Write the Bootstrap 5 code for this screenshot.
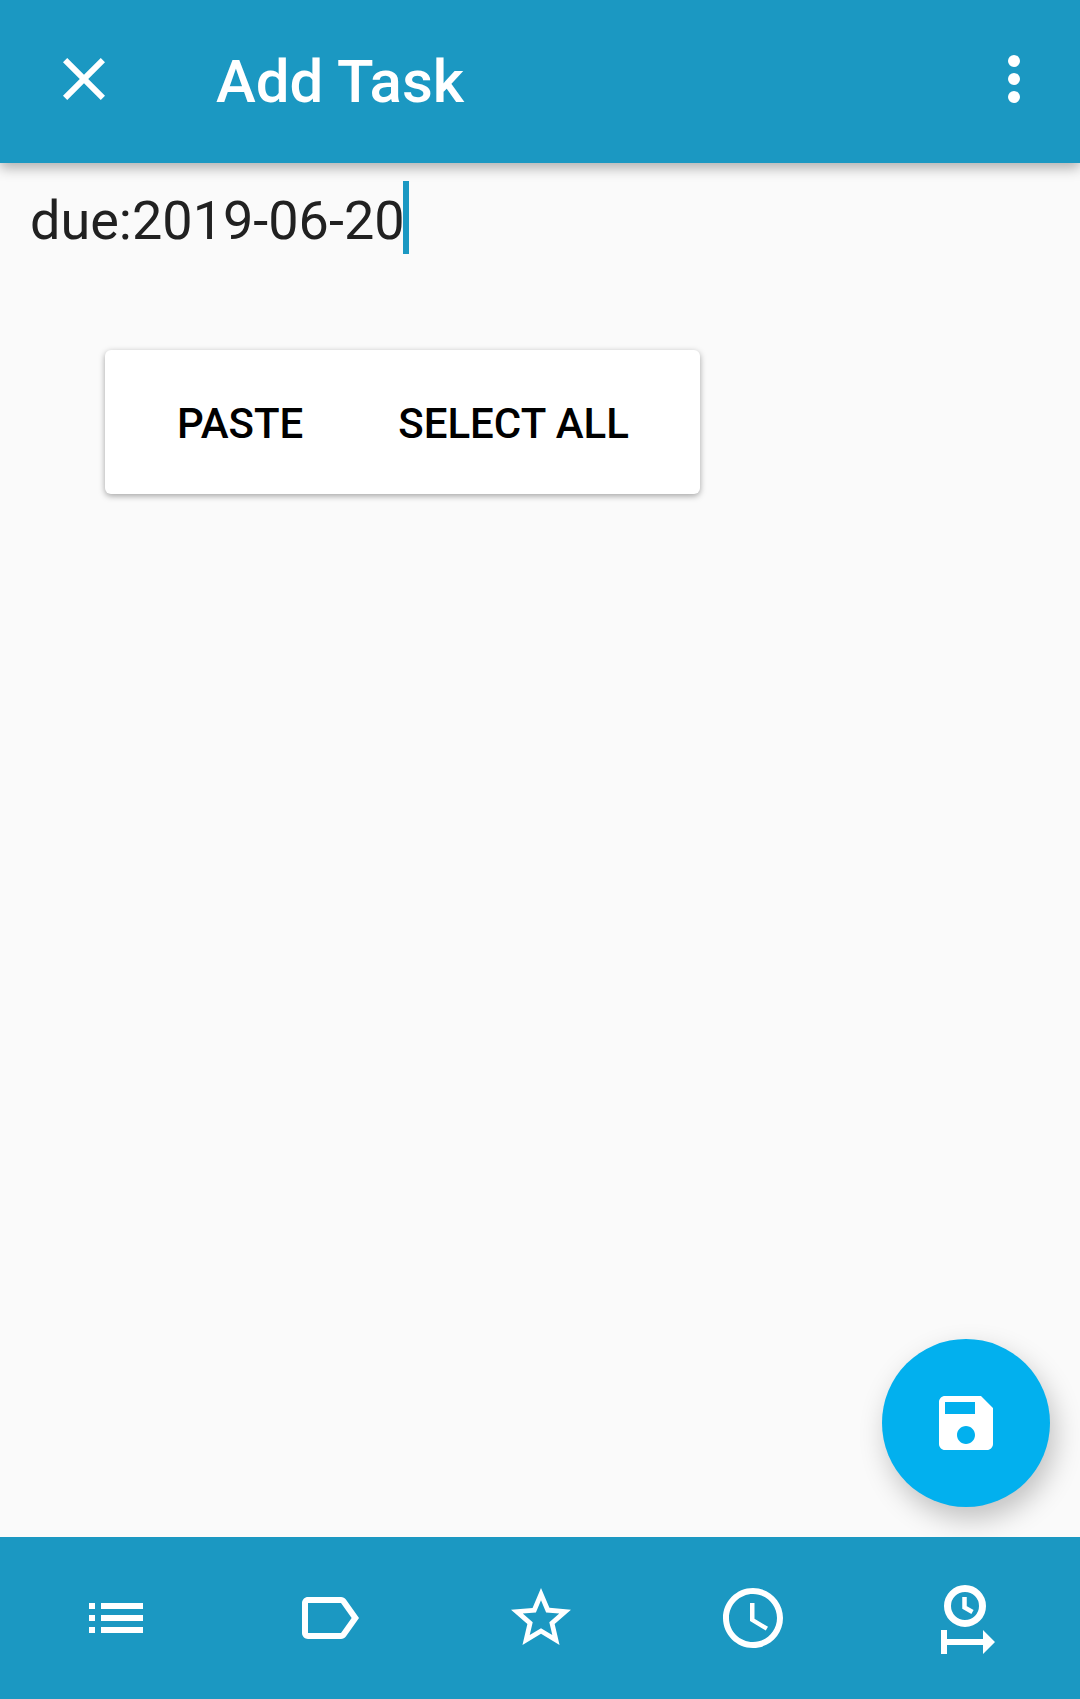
<!DOCTYPE html>
<html lang="en">
<head>
<meta charset="utf-8">
<meta name="viewport" content="width=device-width, initial-scale=1">
<title>Add Task</title>
<link href="https://cdn.jsdelivr.net/npm/bootstrap@5.3.0/dist/css/bootstrap.min.css" rel="stylesheet">
<style>
  body { font-family: Roboto, "Noto Sans", sans-serif; background: #fafafa; }
  .bar { background: #1b98c2; color: #fff; z-index: 2; }
  .bar-top { min-height: 163px; padding: 0 30px 0 48px; box-shadow: 0 5px 12px rgba(0,0,0,.3); }
  .bar-bottom { height: 162px; padding: 0 8px 0 10px; }
  .bar-title { font-size: 60px; line-height: 72px; font-weight: 500; margin-left: 96px; }
  .btn-icon { padding: 0; border: 0; color: inherit; line-height: 0; }
  .btn-icon svg, .fab svg { width: 72px; height: 72px; fill: currentColor; }
  .bar-top .btn-icon { padding-bottom: 5px; }
  .task-line { padding: 18px 30px 0 30px; }
  .task-input { width: 373px; height: 78px; font-size: 54px; color: #212121; background: transparent; outline: 0; }
  .caret { width: 6px; height: 73px; background: #1b98c2; }
  .edit-menu { top: 187px; left: 105px; padding: 0 24px; border-radius: 6px; background: #fff; box-shadow: 0 2px 6px rgba(0,0,0,.35); }
  .edit-menu .btn { height: 144px; padding: 2px 47px 0 48px; border: 0; font-size: 42px; font-weight: 500; color: #000; white-space: nowrap; }
  .fab { right: 30px; bottom: 30px; width: 168px; height: 168px; padding: 0; border: 0; color: #fff; background: #02b0ee; box-shadow: 5px 12px 28px rgba(0,0,0,.23); }
  .fab:hover { color: #fff; background: #02b0ee; }
</style>
</head>
<body class="d-flex flex-column min-vh-100">

<header class="bar bar-top position-relative d-flex align-items-center">
  <button type="button" class="btn btn-icon" aria-label="Close">
    <svg viewBox="0 0 24 24"><path d="M19 6.41 17.59 5 12 10.59 6.41 5 5 6.41 10.59 12 5 17.59 6.41 19 12 13.41 17.59 19 19 17.59 13.41 12z"/></svg>
  </button>
  <h1 class="bar-title mb-0">Add Task</h1>
  <button type="button" class="btn btn-icon ms-auto" aria-label="More options">
    <svg viewBox="0 0 24 24"><circle cx="12" cy="6" r="2"/><circle cx="12" cy="12" r="2"/><circle cx="12" cy="18" r="2"/></svg>
  </button>
</header>

<main class="flex-grow-1 position-relative">
  <div class="task-line d-flex align-items-start">
    <input type="text" class="task-input border-0 p-0" aria-label="Task" value="due:2019-06-20">
    <span class="caret"></span>
  </div>

  <div class="edit-menu position-absolute d-flex" role="toolbar" aria-label="Text actions">
    <button type="button" class="btn">PASTE</button>
    <button type="button" class="btn">SELECT ALL</button>
  </div>

  <button type="button" class="btn fab position-absolute rounded-circle" aria-label="Save">
    <svg viewBox="0 0 24 24"><path d="M17 3H5c-1.11 0-2 .9-2 2v14c0 1.1.89 2 2 2h14c1.1 0 2-.9 2-2V7l-4-4zm-5 16c-1.66 0-3-1.34-3-3s1.34-3 3-3 3 1.34 3 3-1.34 3-3 3zm3-10H5V5h10v4z"/></svg>
  </button>
</main>

<nav class="bar bar-bottom position-relative d-flex" aria-label="Task tools">
  <button type="button" class="btn btn-icon flex-fill" aria-label="Lists">
    <svg viewBox="0 0 24 24"><path d="M3 13h2v-2H3v2zm0 4h2v-2H3v2zm0-8h2V7H3v2zm4 4h14v-2H7v2zm0 4h14v-2H7v2zM7 7v2h14V7H7z"/></svg>
  </button>
  <button type="button" class="btn btn-icon flex-fill" aria-label="Tags">
    <svg viewBox="0 0 24 24"><path d="M17.63 5.84C17.27 5.33 16.67 5 16 5L5 5.01C3.9 5.01 3 5.9 3 7v10c0 1.1.9 1.99 2 1.99L16 19c.67 0 1.27-.33 1.63-.84L22 12l-4.37-6.16zM16 17H5V7h11l3.55 5L16 17z"/></svg>
  </button>
  <button type="button" class="btn btn-icon flex-fill" aria-label="Priority">
    <svg viewBox="0 0 24 24"><path d="M22 9.24l-7.19-.62L12 2 9.19 8.63 2 9.24l5.46 4.73L5.82 21 12 17.27 18.18 21l-1.63-7.03L22 9.24zM12 15.4l-3.76 2.27 1-4.28-3.32-2.88 4.38-.38L12 6.1l1.71 4.04 4.38.38-3.32 2.88 1 4.28L12 15.4z"/></svg>
  </button>
  <button type="button" class="btn btn-icon flex-fill" aria-label="Due date">
    <svg viewBox="0 0 24 24"><path d="M11.99 2C6.47 2 2 6.48 2 12s4.47 10 9.99 10C17.52 22 22 17.52 22 12S17.52 2 11.99 2zM12 20c-4.42 0-8-3.58-8-8s3.58-8 8-8 8 3.58 8 8-3.58 8-8 8zm.5-13H11v6l5.25 3.15.75-1.23-4.5-2.67z"/></svg>
  </button>
  <button type="button" class="btn btn-icon flex-fill" aria-label="Threshold date">
    <svg viewBox="0 0 72 72"><circle cx="35" cy="24" r="17.5" fill="none" stroke="currentColor" stroke-width="7"/><path d="M34.500 15v10.500l8 4.500" fill="none" stroke="currentColor" stroke-width="4.500"/><path d="M11 48h6v9h36v-9l12 12-12 12v-9H17v9h-6z"/></svg>
  </button>
</nav>

<script src="https://cdn.jsdelivr.net/npm/bootstrap@5.3.0/dist/js/bootstrap.bundle.min.js"></script>
</body>
</html>
